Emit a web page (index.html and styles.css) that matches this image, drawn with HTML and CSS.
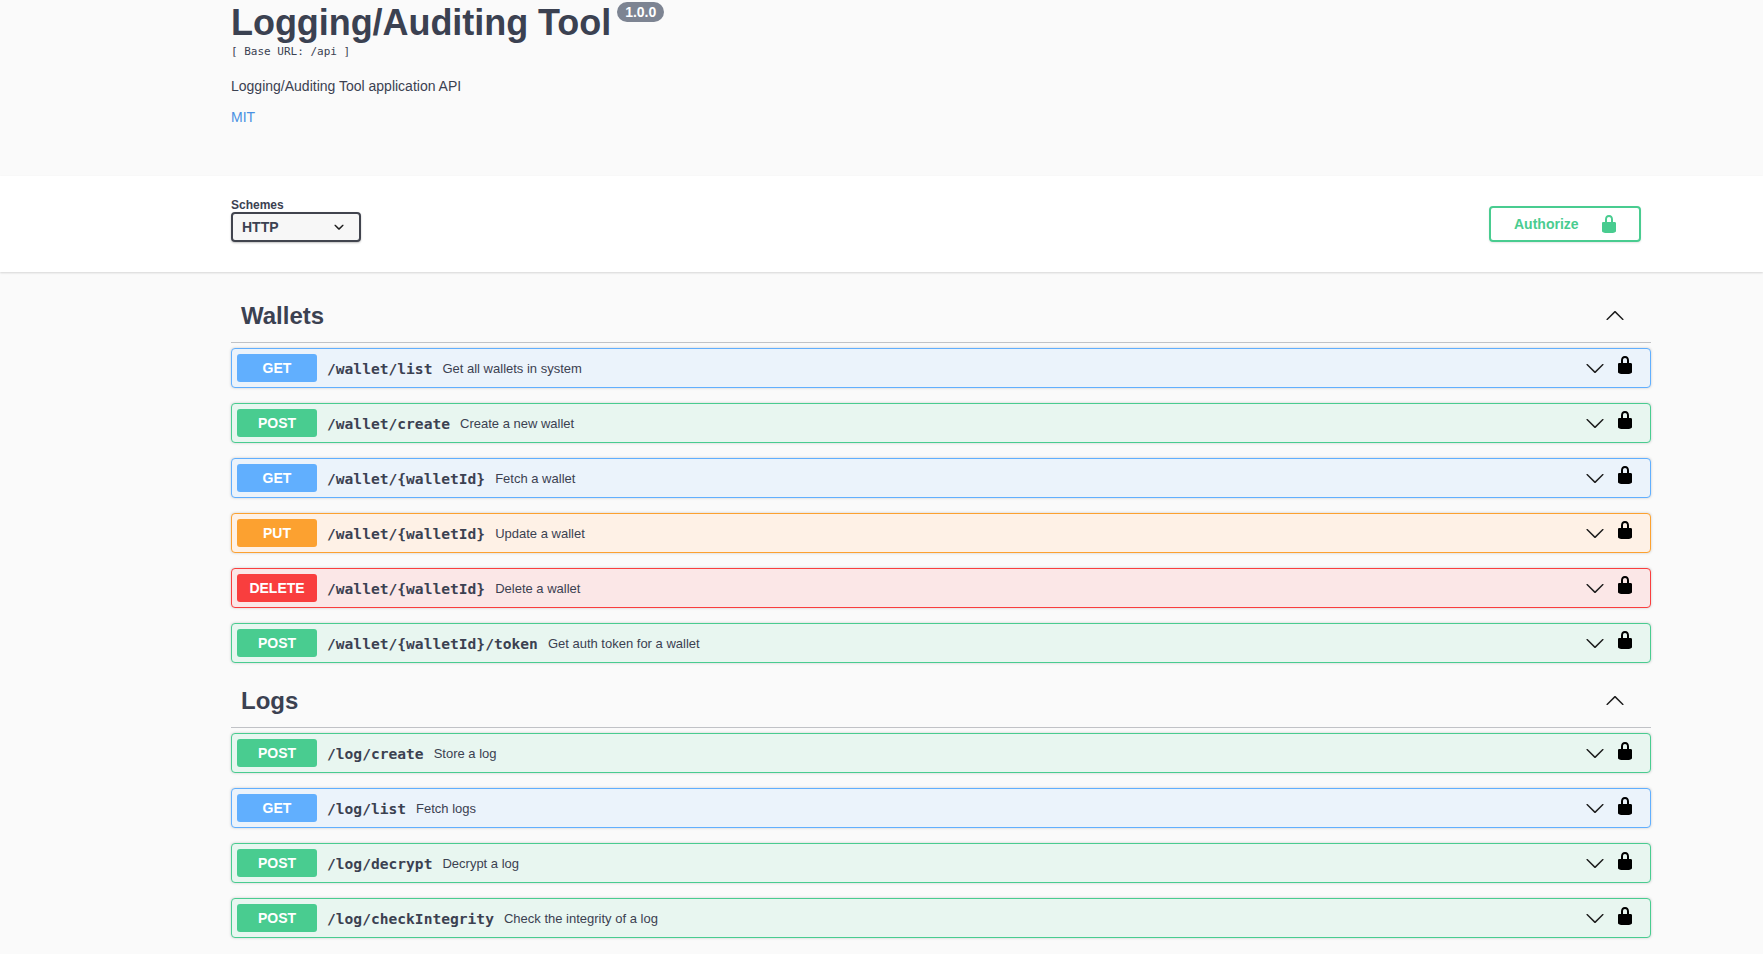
FILE: index.html
```html
<!DOCTYPE html>
<html lang="en">
<head>
<meta charset="utf-8">
<title>Logging/Auditing Tool</title>
<link rel="stylesheet" href="styles.css">
</head>
<body>
<svg class="defs" width="0" height="0" aria-hidden="true">
  <symbol id="lock" viewBox="0 0 20 20"><path d="M15.8 8H14V5.6C14 2.703 12.665 1 10 1 7.334 1 6 2.703 6 5.6V8H4c-.553 0-1 .646-1 1.199V17c0 .549.428 1.139.951 1.307l1.197.387C5.672 18.861 6.55 19 7.1 19h5.8c.549 0 1.428-.139 1.951-.307l1.196-.387c.524-.167.953-.757.953-1.306V9.199C17 8.646 16.352 8 15.8 8zM12 8H8V5.199C8 3.754 8.797 3 10 3c1.203 0 2 .754 2 2.199V8z"/></symbol>
  <symbol id="down" viewBox="0 0 20 20"><path d="M17.418 6.109c.272-.268.709-.268.979 0s.271.701 0 .969l-7.908 7.83c-.27.268-.707.268-.979 0l-7.908-7.83c-.27-.268-.27-.701 0-.969.271-.268.709-.268.979 0L10 13.25l7.418-7.141z"/></symbol>
  <symbol id="up" viewBox="0 0 20 20"><path d="M 17.418 14.908 C 17.69 15.176 18.127 15.176 18.397 14.908 C 18.667 14.64 18.668 14.207 18.397 13.939 L 10.489 6.109 C 10.219 5.841 9.782 5.841 9.51 6.109 L 1.602 13.939 C 1.332 14.207 1.332 14.64 1.602 14.908 C 1.873 15.176 2.311 15.176 2.581 14.908 L 10 7.767 L 17.418 14.908 Z"/></symbol>
</svg>

<section class="info">
  <div class="title-row">
    <h1 class="title">Logging/Auditing Tool</h1>
    <span class="version">1.0.0</span>
  </div>
  <p class="base-url">[ Base URL: /api ]</p>
  <p class="description">Logging/Auditing Tool application API</p>
  <a class="license" href="#">MIT</a>
</section>

<section class="schemes">
  <div class="scheme-field">
    <span class="scheme-label">Schemes</span>
    <div class="select">
      <span>HTTP</span>
      <svg class="select-arrow" viewBox="0 0 20 20"><path d="M13.418 7.859c.271-.268.709-.268.978 0 .27.268.272.701 0 .969l-3.908 3.83c-.27.268-.707.268-.979 0l-3.908-3.83c-.27-.268-.27-.701 0-.969.271-.268.709-.268.978 0L10 11l3.418-3.141z"/></svg>
    </div>
  </div>
  <button class="authorize" type="button">
    <span>Authorize</span>
    <svg class="authorize-lock"><use href="#lock"/></svg>
  </button>
</section>

<main class="ops">
  <section class="tag-section tag-section-wallets">
    <h2 class="tag"><span>Wallets</span><svg class="tag-arrow"><use href="#up"/></svg></h2>
    <div class="op get"><span class="method">GET</span><span class="path">/wallet/list</span><span class="summary">Get all wallets in system</span><svg class="op-arrow"><use href="#down"/></svg><svg class="op-lock"><use href="#lock"/></svg></div>
    <div class="op post"><span class="method">POST</span><span class="path">/wallet/create</span><span class="summary">Create a new wallet</span><svg class="op-arrow"><use href="#down"/></svg><svg class="op-lock"><use href="#lock"/></svg></div>
    <div class="op get"><span class="method">GET</span><span class="path">/wallet/{walletId}</span><span class="summary">Fetch a wallet</span><svg class="op-arrow"><use href="#down"/></svg><svg class="op-lock"><use href="#lock"/></svg></div>
    <div class="op put"><span class="method">PUT</span><span class="path">/wallet/{walletId}</span><span class="summary">Update a wallet</span><svg class="op-arrow"><use href="#down"/></svg><svg class="op-lock"><use href="#lock"/></svg></div>
    <div class="op delete"><span class="method">DELETE</span><span class="path">/wallet/{walletId}</span><span class="summary">Delete a wallet</span><svg class="op-arrow"><use href="#down"/></svg><svg class="op-lock"><use href="#lock"/></svg></div>
    <div class="op post"><span class="method">POST</span><span class="path">/wallet/{walletId}/token</span><span class="summary">Get auth token for a wallet</span><svg class="op-arrow"><use href="#down"/></svg><svg class="op-lock"><use href="#lock"/></svg></div>
  </section>
  <section class="tag-section tag-section-logs">
    <h2 class="tag"><span>Logs</span><svg class="tag-arrow"><use href="#up"/></svg></h2>
    <div class="op post"><span class="method">POST</span><span class="path">/log/create</span><span class="summary">Store a log</span><svg class="op-arrow"><use href="#down"/></svg><svg class="op-lock"><use href="#lock"/></svg></div>
    <div class="op get"><span class="method">GET</span><span class="path">/log/list</span><span class="summary">Fetch logs</span><svg class="op-arrow"><use href="#down"/></svg><svg class="op-lock"><use href="#lock"/></svg></div>
    <div class="op post"><span class="method">POST</span><span class="path">/log/decrypt</span><span class="summary">Decrypt a log</span><svg class="op-arrow"><use href="#down"/></svg><svg class="op-lock"><use href="#lock"/></svg></div>
    <div class="op post"><span class="method">POST</span><span class="path">/log/checkIntegrity</span><span class="summary">Check the integrity of a log</span><svg class="op-arrow"><use href="#down"/></svg><svg class="op-lock"><use href="#lock"/></svg></div>
  </section>
</main>
</body>
</html>
```
FILE: styles.css
```css
* { box-sizing: border-box; }
html, body { margin: 0; }
body {
  background: #fafafa;
  color: #3b4151;
  font-family: "Liberation Sans", Arial, sans-serif;
}
.defs { display: block; height: 0; }

.info {
  height: 176px;
  padding: 0 0 0 231px;
}
.title-row { display: flex; align-items: flex-start; height: 45px; }
.title {
  margin: 0;
  font-size: 36px;
  line-height: 45px;
  font-weight: 700;
  letter-spacing: -.05px;
  color: #3b4151;
}
.version {
  margin: 2px 0 0 6px;
  height: 20px;
  padding: 0 8px;
  border-radius: 57px;
  background: #7d8492;
  color: #fff;
  font-size: 14px;
  font-weight: 700;
  line-height: 20px;
}
.base-url {
  margin: 0;
  font-family: "DejaVu Sans Mono", monospace;
  font-size: 11px;
  line-height: 13px;
  color: #3b4151;
}
.description {
  margin: 20px 0 0;
  font-size: 14px;
  line-height: 16px;
}
.license {
  display: block;
  margin-top: 15px;
  font-size: 14px;
  line-height: 16px;
  color: #4990e2;
  text-decoration: none;
}

.schemes {
  height: 96px;
  background: #fff;
  box-shadow: 0 1px 2px 0 rgba(0,0,0,.15);
  padding: 22px 122px 0 231px;
  display: flex;
  justify-content: space-between;
  align-items: flex-start;
}
.scheme-field { display: flex; flex-direction: column; }
.scheme-label {
  font-size: 12px;
  font-weight: 700;
  line-height: 14px;
}
.select {
  width: 130px;
  height: 30px;
  border: 2px solid #41444e;
  border-radius: 4px;
  background: #f7f7f7;
  box-shadow: 0 1px 2px 0 rgba(0,0,0,.25);
  padding: 0 10px 0 9px;
  display: flex;
  align-items: center;
  justify-content: space-between;
  font-size: 14px;
  font-weight: 700;
  color: #3b4151;
}
.select-arrow { width: 20px; height: 20px; fill: #1f1f1f; }
.authorize {
  margin-top: 8px;
  width: 152px;
  height: 36px;
  border: 2px solid #49cc90;
  border-radius: 4px;
  background: transparent;
  box-shadow: 0 1px 2px rgba(0,0,0,.1);
  color: #49cc90;
  font: 700 14px "Liberation Sans", Arial, sans-serif;
  padding: 0 20px 0 23px;
  display: flex;
  align-items: center;
  justify-content: space-between;
}
.authorize-lock { width: 20px; height: 20px; fill: #49cc90; }

.ops { padding: 21px 112px 0 231px; }
.tag {
  margin: 0 0 5px;
  height: 50px;
  padding: 0 26px 3px 10px;
  border-bottom: 1px solid rgba(59,65,81,.3);
  display: flex;
  align-items: center;
  justify-content: space-between;
  font-size: 24px;
  font-weight: 700;
  color: #3b4151;
}
.tag-arrow { width: 20px; height: 20px; fill: #1c1c1c; margin-top: -2px; }

.op {
  height: 40px;
  margin-bottom: 15px;
  border: 1px solid;
  border-radius: 4px;
  box-shadow: 0 0 3px rgba(0,0,0,.19);
  padding: 0 15px 0 5px;
  display: flex;
  align-items: center;
}
.method {
  width: 80px;
  height: 28px;
  border-radius: 3px;
  color: #fff;
  font-size: 14px;
  font-weight: 700;
  line-height: 28px;
  text-align: center;
  flex: none;
}
.path {
  margin-left: 10px;
  font-family: "DejaVu Sans Mono", monospace;
  font-size: 14.6px;
  font-weight: 700;
  color: #3b4151;
}
.summary {
  margin-left: 10px;
  font-size: 13px;
  color: #3b4151;
  flex: 1;
}
.op-arrow { width: 20px; height: 20px; fill: #1c1c1c; flex: none; }
.op-lock { width: 20px; height: 20px; fill: #000; flex: none; margin-left: 10px; margin-top: -6px; }
.tag-section-logs .op-lock { margin-top: -4px; }

.get { background: #ebf3fb; border-color: #61affe; }
.get .method { background: #61affe; }
.post { background: #e8f6f0; border-color: #49cc90; }
.post .method { background: #49cc90; }
.put { background: #fef1e6; border-color: #fca130; }
.put .method { background: #fca130; }
.delete { background: #fbe7e7; border-color: #f93e3e; }
.delete .method { background: #f93e3e; }
```
